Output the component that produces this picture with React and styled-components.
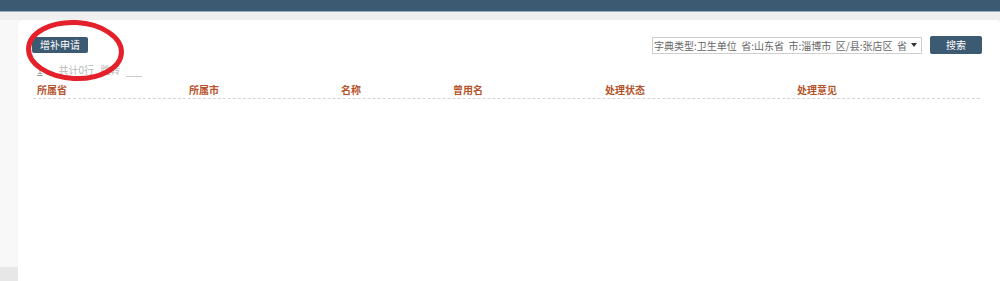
import React from "react";
import styled, { createGlobalStyle } from "styled-components";

const GlobalStyle = createGlobalStyle`
  html, body {
    margin: 0;
    padding: 0;
    height: 281px;
    overflow: hidden;
    background: #efefef;
    font-family: "Noto Sans CJK SC", "Noto Sans", sans-serif;
  }
`;

const Page = styled.div`
  position: relative;
  display: flex;
  flex-direction: column;
  height: 281px;
`;

const TopBar = styled.div`
  height: 11px;
  background: #3d5a73;
  border-bottom: 1px solid #9aabb9;
`;

const Body = styled.div`
  flex: 1;
  display: flex;
`;

const Side = styled.div`
  width: 18px;
  display: flex;
  flex-direction: column;
`;

const SideTop = styled.div`
  flex: 1;
  margin-top: 8px;
  background: #f8f8f8;
`;

const SideBottom = styled.div`
  height: 14px;
  background: #e7e7e7;
`;

const Panel = styled.div`
  flex: 1;
  margin-top: 8px;
  background: #fff;
  border-radius: 4px 4px 0 0;
  padding: 16px 18px 0 14px;
`;

const Toolbar = styled.div`
  display: flex;
  align-items: center;
  justify-content: space-between;
  height: 18px;
`;

const Button = styled.button`
  height: ${(p) => p.h || 16}px;
  padding: 0 ${(p) => p.px || 8}px;
  border: none;
  border-radius: 2px;
  background: #3d5a73;
  color: #fff;
  font-family: inherit;
  font-size: 10px;
  line-height: 16px;
  cursor: pointer;
`;

const SearchGroup = styled.div`
  display: flex;
  align-items: center;
  gap: 8px;
`;

const Select = styled.div`
  width: 267px;
  height: 15px;
  border: 1px solid #cfcfcf;
  display: flex;
  align-items: center;
  font-size: 10px;
  color: #666;
  padding-left: 1px;
`;

const SelectText = styled.span`
  flex: 1;
  min-width: 0;
  white-space: pre;
  overflow: hidden;
  line-height: 15px;
`;

const Caret = styled.span`
  flex: none;
  width: 0;
  height: 0;
  margin: 0 4px 0 4px;
  border-left: 3.5px solid transparent;
  border-right: 3.5px solid transparent;
  border-top: 4px solid #333;
`;

const Pager = styled.div`
  display: flex;
  align-items: flex-end;
  gap: 6px;
  height: 14px;
  margin-top: 9px;
  padding-left: 5px;
  font-size: 10px;
  color: #b8b8b8;
`;

const PageNum = styled.span`
  text-decoration: underline;
  color: #999;
  margin-right: 10px;
`;

const JumpInput = styled.span`
  width: 16px;
  border-bottom: 1px solid #ccc;
  height: 10px;
`;

const Table = styled.div`
  margin: 4px 2px 0 1px;
  border-bottom: 1px dashed #d4d4d4;
  display: grid;
  grid-template-columns: 152px 152px 112px 152px 192px 1fr;
  height: 17px;
  align-items: center;
`;

const Th = styled.div`
  padding-left: 4px;
  font-size: 10px;
  font-weight: bold;
  color: #b5542b;
`;

const Annotation = styled.svg`
  position: absolute;
  left: 0;
  top: 0;
  pointer-events: none;
`;

const columns = ["所属省", "所属市", "名称", "曾用名", "处理状态", "处理意见"];

export default function App() {
  return (
    <Page>
      <GlobalStyle />
      <TopBar />
      <Body>
        <Side>
          <SideTop />
          <SideBottom />
        </Side>
        <Panel>
          <Toolbar>
            <Button>增补申请</Button>
            <SearchGroup>
              <Select>
                <SelectText>{"字典类型:卫生单位  省:山东省  市:淄博市  区/县:张店区  省:山东省"}</SelectText>
                <Caret />
              </Select>
              <Button h={18} px={16}>搜索</Button>
            </SearchGroup>
          </Toolbar>
          <Pager>
            <PageNum>1</PageNum>
            <span>共计0行</span>
            <span>跳转</span>
            <JumpInput />
          </Pager>
          <Table>
            {columns.map((c) => (
              <Th key={c}>{c}</Th>
            ))}
          </Table>
        </Panel>
      </Body>
      <Annotation width="140" height="100">
        <ellipse
          cx="75"
          cy="50.5"
          rx="46.5"
          ry="28"
          fill="none"
          stroke="#e4212b"
          strokeWidth="5"
          transform="rotate(3 75 50.5)"
        />
      </Annotation>
    </Page>
  );
}
